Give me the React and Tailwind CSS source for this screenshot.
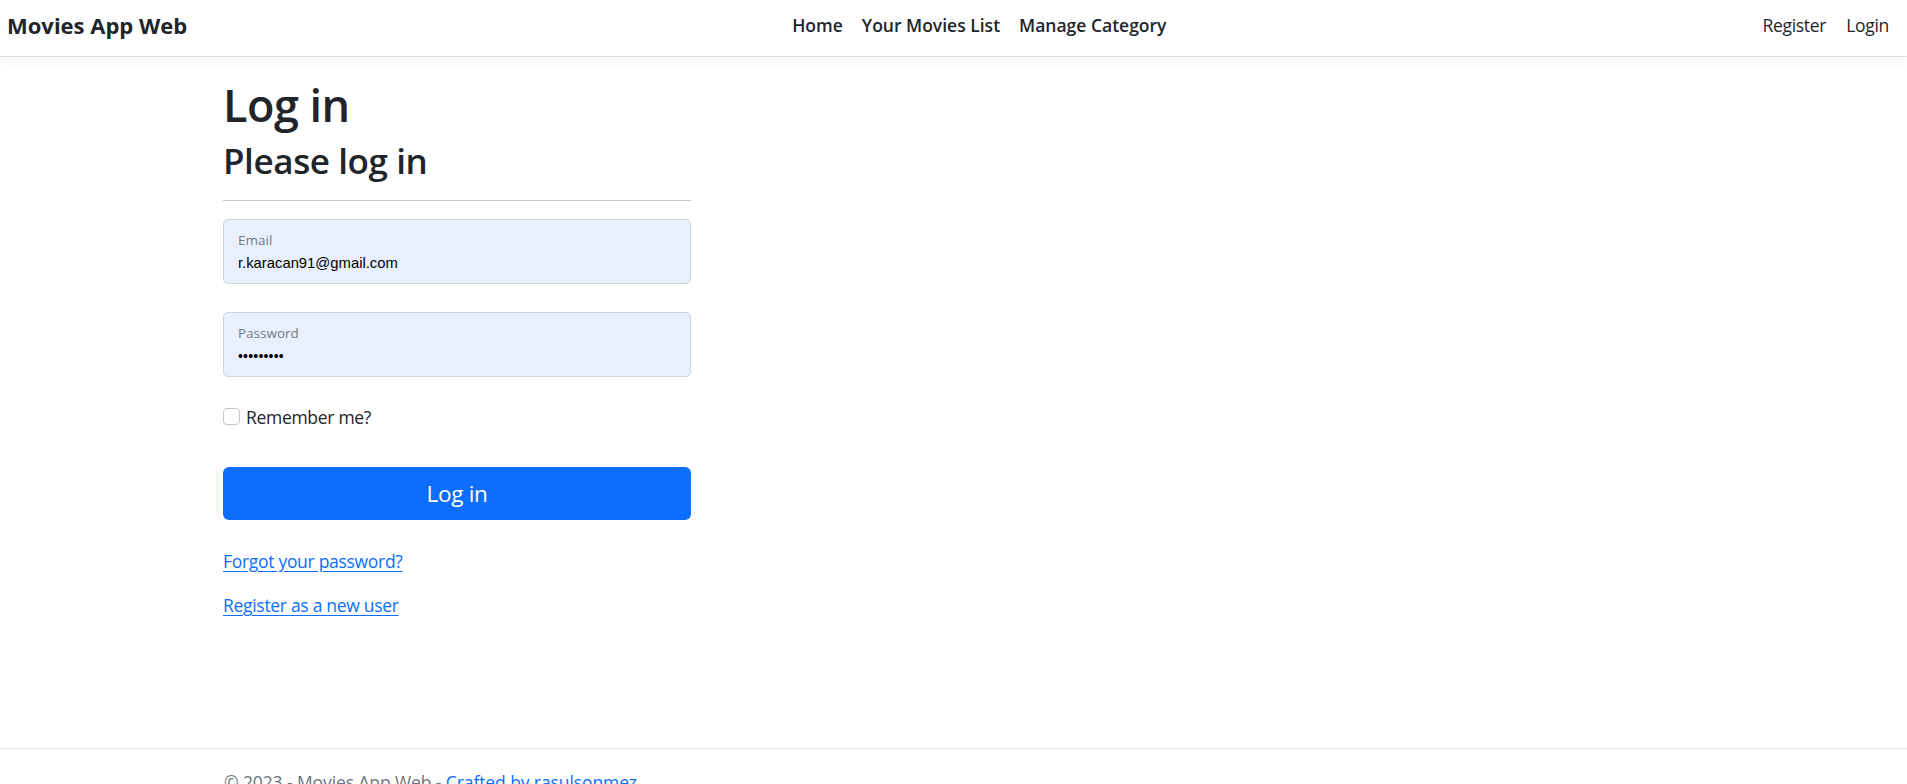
import React from "react";

export default function App() {
  return (
    <div className="min-h-screen bg-white text-[#212529] font-['Open_Sans','Noto_Sans',sans-serif]">
      <header className="relative z-10 h-[57px] border-b border-[#dee2e6] bg-white shadow-[0_4px_12px_rgba(0,0,0,0.05)] flex items-start pl-[7px] pr-[8px]">
        <a className="pt-[10px] text-[22px] leading-[30px] font-bold text-[#212529] mr-[19px] whitespace-nowrap">Movies App Web</a>
        <nav className="flex-1 flex justify-center pt-[13px]">
          <a className="px-[9.5px] text-[17.5px] leading-[24px] font-semibold">Home</a>
          <a className="px-[9.5px] text-[17.5px] leading-[24px] font-semibold">Your Movies List</a>
          <a className="px-[9.5px] text-[17.5px] leading-[24px] font-semibold">Manage Category</a>
        </nav>
        <nav className="flex pt-[13px]">
          <a className="px-[10px] text-[17.5px] leading-[24px] tracking-[-0.3px] text-[#212529]">Register</a>
          <a className="px-[10px] text-[17.5px] leading-[24px] tracking-[-0.3px] text-[#212529]">Login</a>
        </nav>
      </header>

      <main className="pl-[223px]">
        <div className="w-[468px] flex flex-col">
          <h1 className="mt-[20px] text-[45px] leading-[56px] font-semibold tracking-[-0.5px]">Log in</h1>
          <h2 className="mt-[6px] text-[35px] leading-[44px] font-semibold tracking-[-0.4px]">Please log in</h2>
          <hr className="mt-[17px] border-0 h-px bg-[#c8c9ca]" />
          <div className="mt-[18px] h-[65px] rounded-[5px] border border-[#ced4da] bg-[#e8f0fe] pl-[14px] flex flex-col">
            <label className="pt-[12px] text-[13.5px] leading-[16px] text-[#767b80]">Email</label>
            <input
              readOnly
              defaultValue="r.karacan91@gmail.com"
              className="mt-[6px] bg-transparent outline-none text-[14.8px] leading-[18px] h-[18px] text-black font-['Liberation_Sans',Arial,sans-serif]"
            />
          </div>
          <div className="mt-[28px] h-[65px] rounded-[5px] border border-[#ced4da] bg-[#e8f0fe] pl-[14px] flex flex-col">
            <label className="pt-[12px] text-[13.5px] leading-[16px] text-[#767b80]">Password</label>
            <span className="mt-[6px] text-[14px] leading-[18px] h-[18px] text-black font-['Liberation_Sans',Arial,sans-serif] tracking-[0.2px]">•••••••••</span>
          </div>
          <div className="mt-[28px] flex items-start">
            <span className="mt-[3px] w-[17px] h-[17px] rounded-[4px] border border-[#c4c7ca] bg-white"></span>
            <span className="ml-[6px] text-[17.5px] leading-[24px] tracking-[-0.3px]">Remember me?</span>
          </div>
          <button className="mt-[38px] h-[53px] rounded-[6px] bg-[#0d6efd] text-white text-[22.5px] leading-[30px] tracking-[-0.3px] flex items-center justify-center">Log in</button>
          <a className="mt-[29px] text-[17.5px] leading-[24px] tracking-[-0.3px] text-[#0d6efd] underline underline-offset-[3px] self-start">Forgot your password?</a>
          <a className="mt-[20px] text-[17.5px] leading-[24px] tracking-[-0.3px] text-[#0d6efd] underline underline-offset-[3px] self-start">Register as a new user</a>
        </div>
      </main>

      <footer className="mt-[131px] border-t border-[#dee2e6] pl-[224px] pt-[21px]">
        <p className="text-[17.5px] leading-[24px] tracking-[-0.1px] text-[#6c757d]">
          © 2023 - Movies App Web - <a className="text-[#0d6efd]">Crafted by rasulsonmez</a>
        </p>
      </footer>
    </div>
  );
}
